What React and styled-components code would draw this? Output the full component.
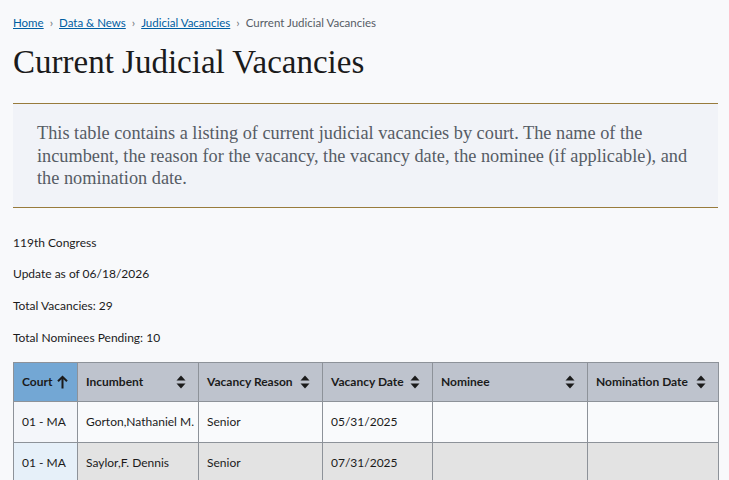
import React from 'react';
import styled, { createGlobalStyle } from 'styled-components';

const GlobalStyle = createGlobalStyle`
  html, body {
    margin: 0;
    padding: 0;
    background: #f8f9fb;
  }
  body {
    font-family: 'Lato', 'Noto Sans', sans-serif;
    color: #1b1b1b;
  }
`;

const Page = styled.main`
  padding: 15px 11px 0 13px;
`;

const Crumbs = styled.nav`
  display: flex;
  align-items: center;
  gap: 5px;
  font-size: 11.5px;
  line-height: 16px;
  color: #565c65;
`;

const Crumb = styled.a`
  color: #005ea2;
  text-decoration: underline;
`;

const Sep = styled.span`
  font-size: 12px;
  color: #71767a;
  padding: 0 1px;
`;

const Title = styled.h1`
  margin: 11px 0 0;
  font-family: 'Liberation Serif', 'DejaVu Serif', serif;
  font-weight: 400;
  font-size: 33px;
  line-height: 40px;
  color: #1b1b1b;
`;

const Summary = styled.section`
  margin-top: 21px;
  border-top: 1px solid #987b3c;
  border-bottom: 1px solid #987b3c;
  background: #f1f3f8;
  padding: 18px 24px 17px;
  font-family: 'Liberation Serif', 'DejaVu Serif', serif;
  font-size: 18.3px;
  line-height: 22.5px;
  color: #565c65;
`;

const Facts = styled.div`
  display: flex;
  flex-direction: column;
  gap: 14.7px;
  margin-top: 26px;
  font-size: 12px;
  line-height: 17px;
`;

const Table = styled.table`
  margin-top: 16px;
  width: 705px;
  table-layout: fixed;
  border-collapse: collapse;
  font-size: 12px;
`;

const Th = styled.th`
  height: 38px;
  padding: ${p => (p.sorted ? '0 6px 0 8px' : '0 12px 0 8px')};
  text-align: left;
  font-weight: 700;
  background: ${p => (p.sorted ? '#73a7d4' : '#bec3cd')};
  border: 1px solid #8d9299;
  white-space: nowrap;
`;

const HeadInner = styled.div`
  display: flex;
  align-items: center;
  justify-content: ${p => (p.sorted ? 'flex-start' : 'space-between')};
  gap: 5px;

  svg {
    flex-shrink: 0;
  }
`;

const Td = styled.td`
  height: 40px;
  padding: 0 8px;
  border: 1px solid #8d9299;
  white-space: nowrap;
  overflow: hidden;
  background: ${p => (p.sorted ? (p.alt ? '#e6f0f9' : '#f4f6fa') : p.alt ? '#e3e3e3' : '#f9fafc')};
`;

const SortIcon = () => (
  <svg width="10" height="14" viewBox="0 0 10 14">
    <path d="M5 0.5 L9.5 5.5 H0.5 Z" fill="#1b1b1b" />
    <path d="M5 13.5 L9.5 8.5 H0.5 Z" fill="#1b1b1b" />
  </svg>
);

const UpArrow = () => (
  <svg width="11" height="14" viewBox="0 0 11 14">
    <path d="M5.5 13.5 V1.8 M1 6.3 L5.5 1.8 L10 6.3" stroke="#1b1b1b" strokeWidth="2" fill="none" />
  </svg>
);

const columns = [
  { label: 'Court', width: 64, sorted: true },
  { label: 'Incumbent', width: 121 },
  { label: 'Vacancy Reason', width: 124 },
  { label: 'Vacancy Date', width: 110 },
  { label: 'Nominee', width: 155 },
  { label: 'Nomination Date', width: 131 },
];

const rows = [
  ['01 - MA', 'Gorton,Nathaniel M.', 'Senior', '05/31/2025', '', ''],
  ['01 - MA', 'Saylor,F. Dennis', 'Senior', '07/31/2025', '', ''],
];

const App = () => (
  <>
    <GlobalStyle />
    <Page>
      <Crumbs>
        <Crumb>Home</Crumb>
        <Sep>›</Sep>
        <Crumb>Data &amp; News</Crumb>
        <Sep>›</Sep>
        <Crumb>Judicial Vacancies</Crumb>
        <Sep>›</Sep>
        <span>Current Judicial Vacancies</span>
      </Crumbs>
      <Title>Current Judicial Vacancies</Title>
      <Summary>
        This table contains a listing of current judicial vacancies by court. The name of the
        incumbent, the reason for the vacancy, the vacancy date, the nominee (if applicable), and
        the nomination date.
      </Summary>
      <Facts>
        <div>119th Congress</div>
        <div>Update as of 06/18/2026</div>
        <div>Total Vacancies: 29</div>
        <div>Total Nominees Pending: 10</div>
      </Facts>
      <Table>
        <colgroup>
          {columns.map(c => (
            <col key={c.label} style={{ width: c.width }} />
          ))}
        </colgroup>
        <thead>
          <tr>
            {columns.map(c => (
              <Th key={c.label} sorted={c.sorted}>
                <HeadInner sorted={c.sorted}>
                  {c.label}
                  {c.sorted ? <UpArrow /> : <SortIcon />}
                </HeadInner>
              </Th>
            ))}
          </tr>
        </thead>
        <tbody>
          {rows.map((r, i) => (
            <tr key={i}>
              {r.map((cell, j) => (
                <Td key={j} sorted={j === 0} alt={i % 2 === 1}>
                  {cell}
                </Td>
              ))}
            </tr>
          ))}
        </tbody>
      </Table>
    </Page>
  </>
);

export default App;
